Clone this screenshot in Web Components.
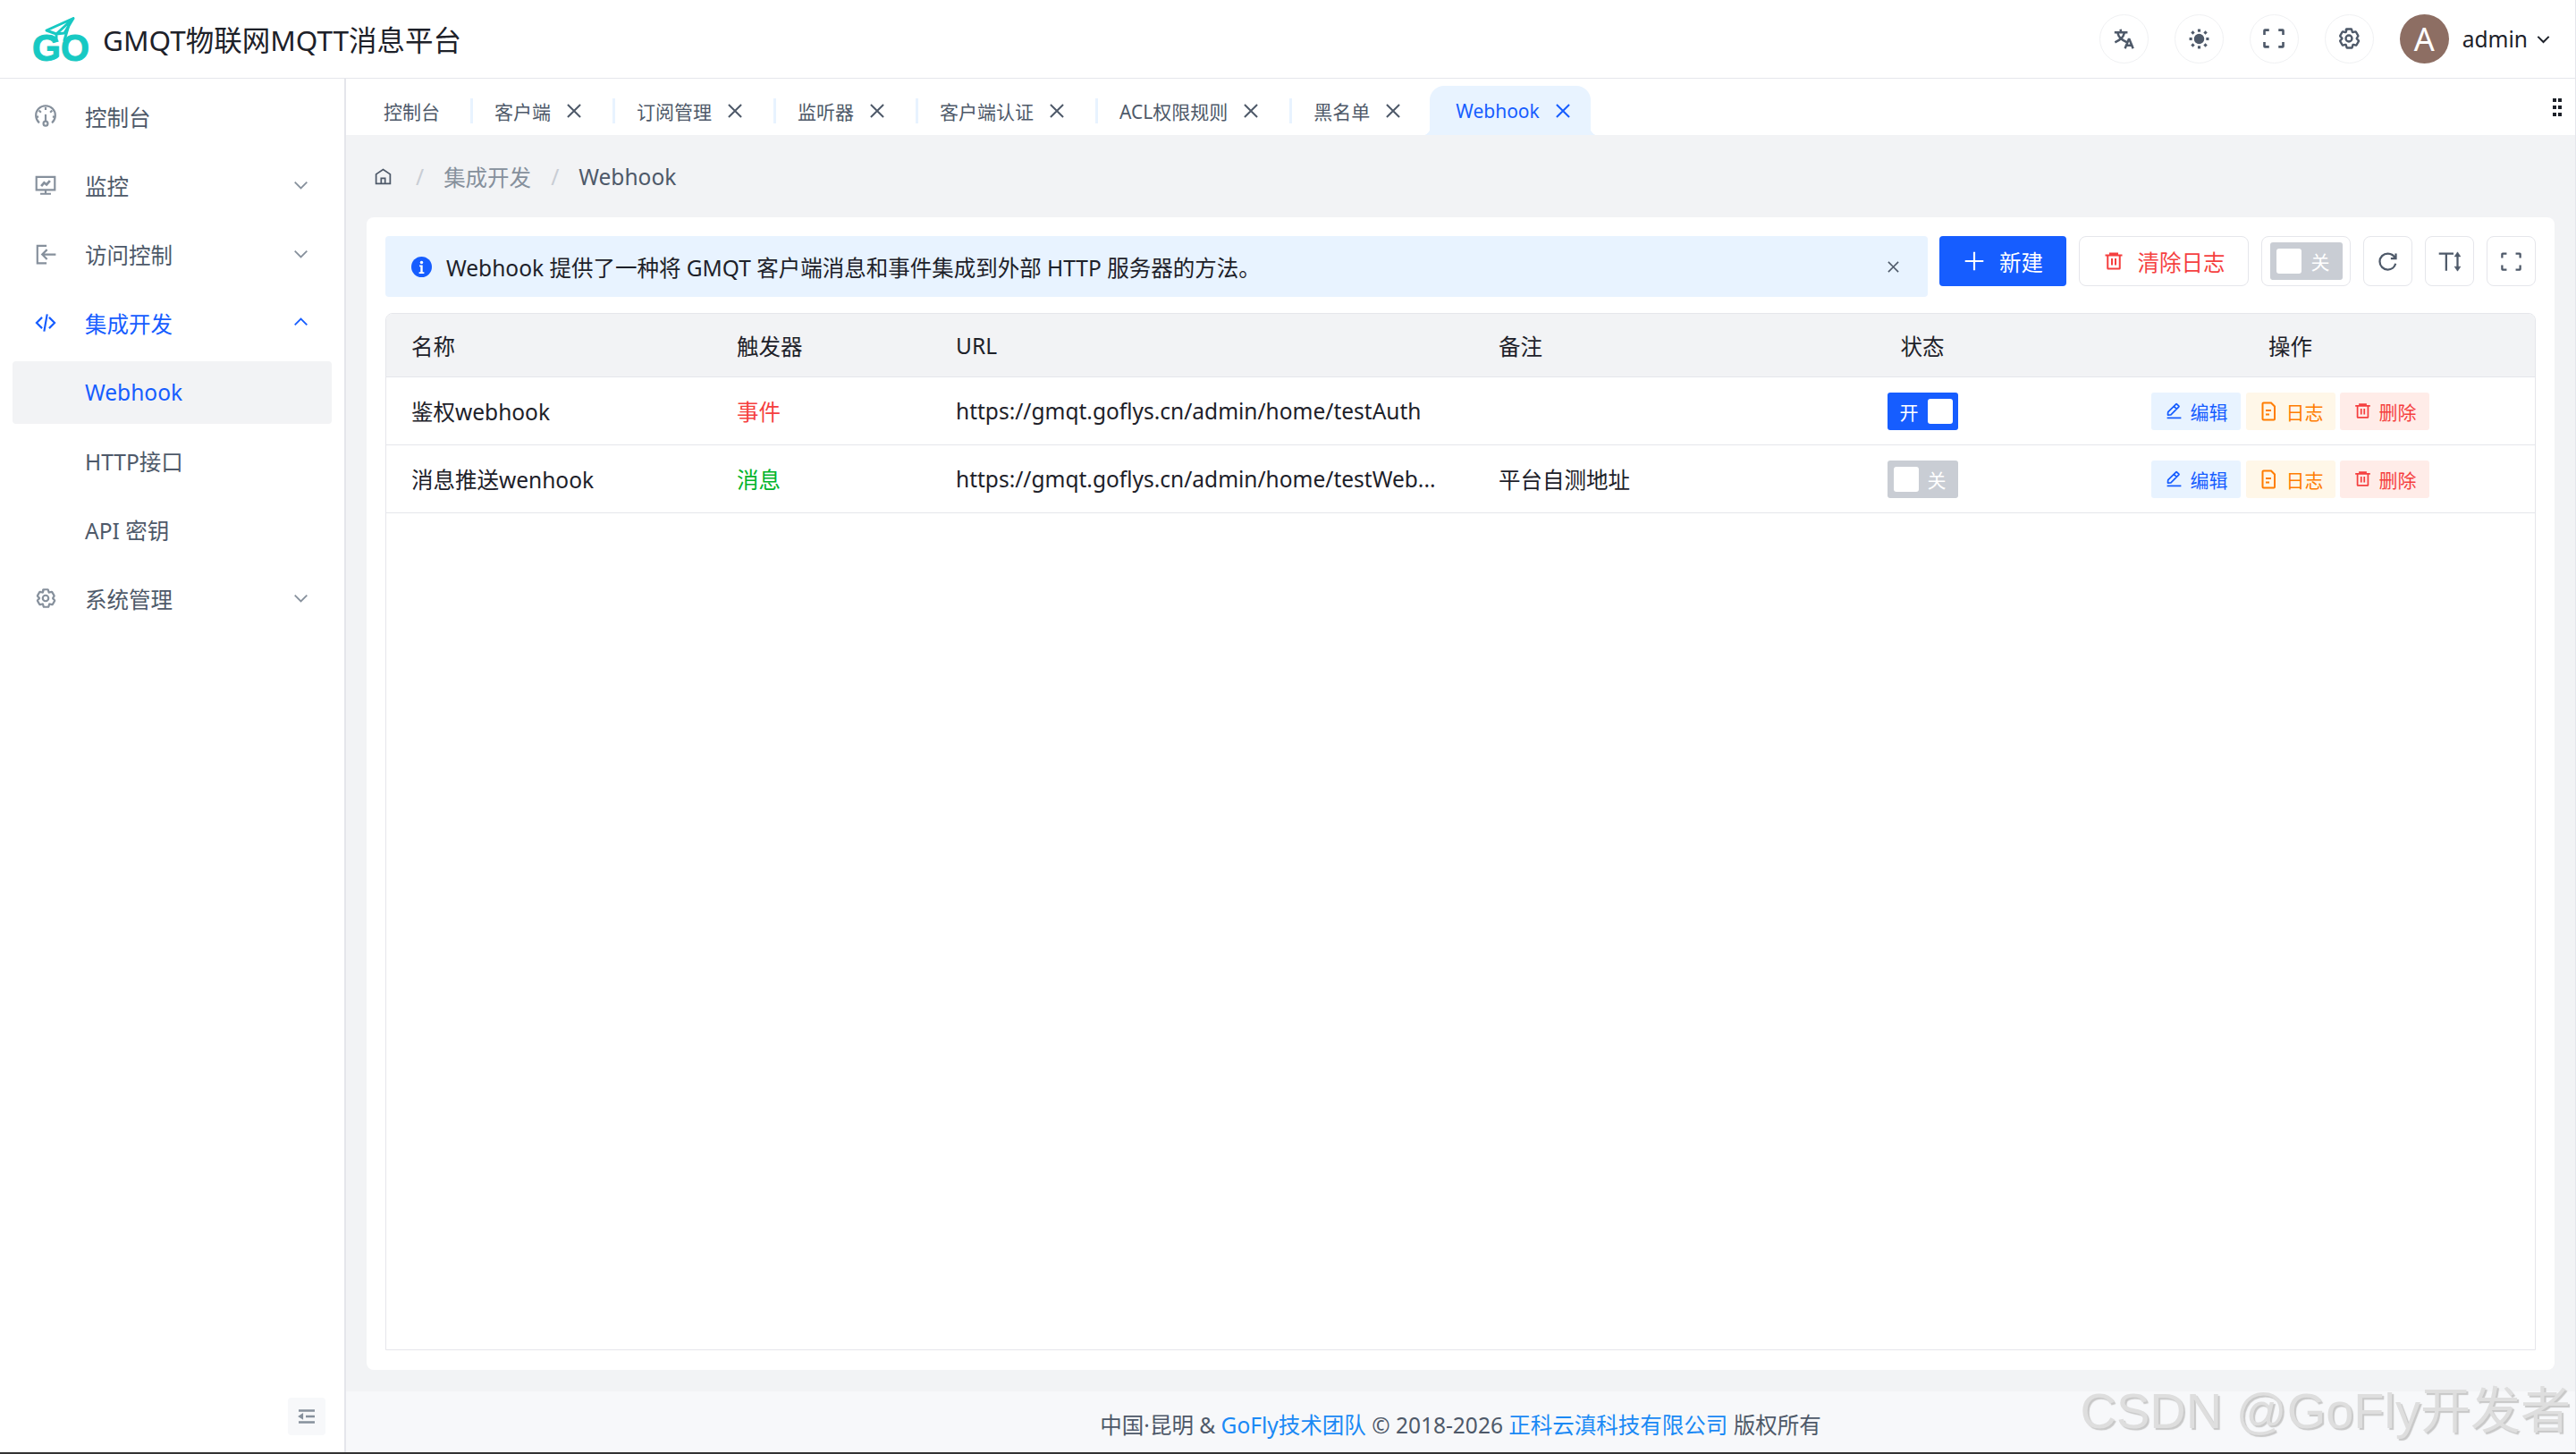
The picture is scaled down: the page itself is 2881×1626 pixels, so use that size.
<!DOCTYPE html>
<html lang="zh-CN">
<head>
<meta charset="utf-8">
<title>Webhook</title>
<style>
  html, body { margin: 0; padding: 0; }
  body {
    width: 2881px;
    height: 1626px;
    overflow: hidden;
    font-family: "Noto Sans", "Noto Sans CJK SC", sans-serif;
    font-size: 24.5px;
    color: #1d2129;
    background: #fff;
  }
</style>
</head>
<body>
<gm-app>
  <gm-header slot="header" title="GMQT物联网MQTT消息平台" user="admin"></gm-header>
  <gm-sidebar slot="side">
    <gm-menu icon="gauge">控制台</gm-menu>
    <gm-menu icon="monitor" arrow="down">监控</gm-menu>
    <gm-menu icon="import" arrow="down">访问控制</gm-menu>
    <gm-menu icon="code" arrow="up" open>集成开发</gm-menu>
    <gm-menu sub selected>Webhook</gm-menu>
    <gm-menu sub>HTTP接口</gm-menu>
    <gm-menu sub>API 密钥</gm-menu>
    <gm-menu icon="settings" arrow="down">系统管理</gm-menu>
  </gm-sidebar>
  <gm-tabs slot="tabs">
    <gm-tab>控制台</gm-tab>
    <gm-tab closable>客户端</gm-tab>
    <gm-tab closable>订阅管理</gm-tab>
    <gm-tab closable>监听器</gm-tab>
    <gm-tab closable>客户端认证</gm-tab>
    <gm-tab closable>ACL权限规则</gm-tab>
    <gm-tab closable plain>黑名单</gm-tab>
    <gm-tab closable active>Webhook</gm-tab>
  </gm-tabs>
  <gm-breadcrumb slot="crumb" parent="集成开发" current="Webhook"></gm-breadcrumb>
  <gm-card slot="card">
    <gm-alert slot="alert">Webhook 提供了一种将 GMQT 客户端消息和事件集成到外部 HTTP 服务器的方法。</gm-alert>
    <gm-button slot="tools" kind="primary" icon="plus">新建</gm-button>
    <gm-button slot="tools" kind="danger" icon="delete">清除日志</gm-button>
    <gm-button slot="tools" kind="box"><gm-switch wide>关</gm-switch></gm-button>
    <gm-button slot="tools" kind="icon" icon="refresh"></gm-button>
    <gm-button slot="tools" kind="icon" icon="lineheight"></gm-button>
    <gm-button slot="tools" kind="icon" icon="fullscreen"></gm-button>
    <gm-table>
      <gm-row head>
        <gm-cell>名称</gm-cell><gm-cell>触发器</gm-cell><gm-cell>URL</gm-cell><gm-cell>备注</gm-cell>
        <gm-cell center>状态</gm-cell><gm-cell center>操作</gm-cell>
      </gm-row>
      <gm-row>
        <gm-cell>鉴权webhook</gm-cell>
        <gm-cell style="color:#f53f3f">事件</gm-cell>
        <gm-cell>https://gmqt.goflys.cn/admin/home/testAuth</gm-cell>
        <gm-cell></gm-cell>
        <gm-cell center><gm-switch on>开</gm-switch></gm-cell>
        <gm-cell center><gm-actions></gm-actions></gm-cell>
      </gm-row>
      <gm-row>
        <gm-cell>消息推送wenhook</gm-cell>
        <gm-cell style="color:#00b42a">消息</gm-cell>
        <gm-cell>https://gmqt.goflys.cn/admin/home/testWeb...</gm-cell>
        <gm-cell>平台自测地址</gm-cell>
        <gm-cell center><gm-switch>关</gm-switch></gm-cell>
        <gm-cell center><gm-actions></gm-actions></gm-cell>
      </gm-row>
    </gm-table>
  </gm-card>
  <gm-footer slot="footer"></gm-footer>
</gm-app>

<script>
const FONT = '"Noto Sans", "Noto Sans CJK SC", sans-serif'

// stroke icons sit on a 48 box, same as the admin template uses
const ICONS = {
  gauge: '<path d="M11 37.5A20 20 0 1 1 37 37.5"/><path d="M24 5v6M10.5 12l4 4M37.5 12l-4 4M4.5 25h5M38.5 25h5"/><path d="M24 20v15"/><circle cx="24" cy="39" r="4.5"/>',
  monitor: '<path d="M5 7h38v27H5z"/><path d="M24 34v8M13 42h22"/><path d="M15 26l6-7 5 4 7-8" stroke-width="5"/>',
  import: '<path d="M26 7H7v36h19"/><path d="M45 25H18M27 15 17 25l10 10"/>',
  code: '<path d="M16.734 12.686 5.42 24l11.314 11.314m14.521-22.628L42.57 24 31.255 35.314M27.2 6.28l-6.251 35.453"/>',
  settings: '<path d="M18.797 6.732A1 1 0 0 1 19.76 6h8.48a1 1 0 0 1 .964.732l1.285 4.628a1 1 0 0 0 1.213.7l4.651-1.2a1 1 0 0 1 1.116.468l4.24 7.344a1 1 0 0 1-.153 1.2L39.193 23.3a1 1 0 0 0 0 1.402l3.364 3.427a1 1 0 0 1 .153 1.2l-4.24 7.344a1 1 0 0 1-1.116.468l-4.65-1.2a1 1 0 0 0-1.214.7l-1.285 4.628a1 1 0 0 1-.964.732h-8.48a1 1 0 0 1-.964-.732L18.51 36.64a1 1 0 0 0-1.213-.7l-4.65 1.2a1 1 0 0 1-1.116-.468l-4.24-7.344a1 1 0 0 1 .153-1.2L10.807 24.7a1 1 0 0 0 0-1.402l-3.364-3.427a1 1 0 0 1-.153-1.2l4.24-7.344a1 1 0 0 1 1.116-.468l4.65 1.2a1 1 0 0 0 1.213-.7l1.286-4.628Z"/><path d="M30 24a6 6 0 1 1-12 0 6 6 0 0 1 12 0Z"/>',
  down: '<path d="M39.6 17.443 24.043 33 8.487 17.443"/>',
  up: '<path d="M39.6 30.557 24.043 15 8.487 30.557"/>',
  close: '<path d="M9.857 9.858 24 24m0 0 14.142 14.142M24 24 38.142 9.858M24 24 9.857 38.142"/>',
  plus: '<path d="M5 24h38M24 5v38"/>',
  delete: '<path d="M5 11h5.5m0 0v29a1 1 0 0 0 1 1h25a1 1 0 0 0 1-1V11m-27 0H16m21.5 0H43m-5.5 0H32m-16 0V7h16v4m-16 0h16M20 18v15m8-15v15"/>',
  edit: '<path d="m30.48 19.038 5.733-5.734a1 1 0 0 0 0-1.414l-5.586-5.586a1 1 0 0 0-1.414 0l-5.734 5.734m7 7L15.763 33.754a1 1 0 0 1-.59.286l-6.048.708a1 1 0 0 1-1.113-1.069l.477-6.31a1 1 0 0 1 .29-.631l14.7-14.7m7 7-7-7M6 42h36"/>',
  file: '<path d="M13 5h17l8 8v28a2 2 0 0 1-2 2H13a2 2 0 0 1-2-2V7a2 2 0 0 1 2-2Z"/><path d="M18 22h12M18 31h8"/>',
  refresh: '<path d="M38.837 18C36.463 12.136 30.715 8 24 8 15.163 8 8 15.163 8 24s7.163 16 16 16c7.455 0 13.72-5.1 15.496-12M40 8v10H30"/>',
  fullscreen: '<path d="M42 17V9a1 1 0 0 0-1-1h-8M6 17V9a1 1 0 0 1 1-1h8m27 23v8a1 1 0 0 1-1 1h-8M6 31v8a1 1 0 0 0 1 1h8"/>',
  home: '<path d="M6 18 24 6l18 12v24H6V18Z"/><path d="M19 42V28h10v14"/>',
  language: '<path d="m42 43-2.385-6M26 43l2.384-6m11.231 0-.795-2-4.18-10h-1.28l-4.181 10-.795 2m11.231 0h-11.23M17 5l1 5M5 11h26M11 11s1.889 7.826 6.611 12.174C22.333 27.522 30 31 30 31"/><path d="M25 11s-1.889 7.826-6.611 12.174C13.667 27.522 6 31 6 31"/>',
  sun: '<circle cx="24" cy="24" r="11" fill="currentColor" stroke="none"/><g fill="currentColor" stroke="none"><rect x="21" y="3" width="6" height="6"/><rect x="21" y="39" width="6" height="6"/><rect x="3" y="21" width="6" height="6"/><rect x="39" y="21" width="6" height="6"/><rect x="7.5" y="7.5" width="6" height="6" transform="rotate(45 10.5 10.5)"/><rect x="34.5" y="7.5" width="6" height="6" transform="rotate(45 37.5 10.5)"/><rect x="7.5" y="34.5" width="6" height="6" transform="rotate(45 10.5 37.5)"/><rect x="34.5" y="34.5" width="6" height="6" transform="rotate(45 37.5 37.5)"/></g>',
  lineheight: '<path d="M3 8h29M17.5 8v34"/><path d="M40 12v24"/><path d="M34 14l6-9 6 9ZM34 34l6 9 6-9Z" fill="currentColor" stroke-width="1"/>',
  fold: '<path d="M42 11H6M42 24H22M42 37H6"/><path d="M13.66 26.912l-4.82-3.118 4.82-3.118v6.236Z" fill="currentColor"/>',
  info: '<circle cx="24" cy="24" r="24" fill="currentColor" stroke="none"/><g fill="#fff" stroke="none"><circle cx="24" cy="13.5" r="3.6"/><path d="M19 20h7.5v16H30v3.5H18V36h3.5V23.5H19Z"/></g>',
}

class GmIcon extends HTMLElement {
  constructor() {
    super()
    this.attachShadow({ mode: "open" })
  }
  connectedCallback() {
    const size = this.getAttribute("size") || 24
    const sw = this.getAttribute("stroke") || 4
    this.shadowRoot.innerHTML = `
      <style>
        :host { display: inline-flex; flex: none; width: ${size}px; height: ${size}px; }
        svg { width: 100%; height: 100%; display: block; overflow: visible; }
      </style>
      <svg viewBox="0 0 48 48" fill="none" stroke="currentColor" stroke-width="${sw}">${ICONS[this.getAttribute("name")] || ""}</svg>`
  }
}

class GmApp extends HTMLElement {
  constructor() {
    super()
    this.attachShadow({ mode: "open" })
    this.shadowRoot.innerHTML = `
      <style>
        :host {
          display: grid;
          grid-template-rows: 88px 1fr;
          grid-template-columns: 387px 1fr;
          height: 1624px;
          border-bottom: 2px solid #333;
          border-right: 1px solid #e5e6eb;
          box-sizing: content-box;
          width: 2880px;
          font-family: ${FONT};
        }
        .top { grid-column: 1 / 3; }
        .main { display: flex; flex-direction: column; background: #f2f3f5; min-width: 0; position: relative; }
        .body { flex: 1; display: flex; min-height: 0; padding: 0 23px 24px 23px; }
      </style>
      <div class="top"><slot name="header"></slot></div>
      <slot name="side"></slot>
      <div class="main">
        <slot name="tabs"></slot>
        <slot name="crumb"></slot>
        <div class="body"><slot name="card"></slot></div>
        <slot name="footer"></slot>
      </div>`
  }
}

class GmHeader extends HTMLElement {
  constructor() {
    super()
    this.attachShadow({ mode: "open" })
  }
  connectedCallback() {
    const round = (name, size, sw) =>
      `<span class="round"><gm-icon name="${name}" size="${size}" stroke="${sw}"></gm-icon></span>`
    this.shadowRoot.innerHTML = `
      <style>
        :host { display: flex; align-items: center; height: 88px; box-sizing: border-box; background: #fff;
                border-bottom: 1px solid #e5e6eb; padding: 0 26px 1px 30px; }
        .logo { width: 80px; height: 65px; flex: none; display: block; }
        h1 { font: 400 31.5px ${FONT}; color: #1d2129; margin: 0 0 0 5px; white-space: nowrap; }
        .right { margin-left: auto; display: flex; align-items: center; gap: 29px; }
        .round { width: 55px; height: 55px; box-sizing: border-box; border: 1px solid #f0f1f3; border-radius: 50%;
                 display: flex; align-items: center; justify-content: center; color: #4e5969; }
        .user { display: flex; align-items: center; font-size: 24.5px; color: #1d2129; }
        .avatar { width: 55px; height: 55px; border-radius: 50%; background: #8d6e63; color: #fff; font-size: 36px;
                  display: flex; align-items: center; justify-content: center; margin-right: 15px; }
        .user gm-icon { margin-left: 8px; }
      </style>
      <svg class="logo" viewBox="0 0 80 65">
        <g fill="none" stroke="#17c9c3" stroke-width="3" stroke-linejoin="round" stroke-linecap="round">
          <path d="M52 9.5 22 23l11 4 19-17.500L42 26l-9 1v7"/>
          <path d="M47 17 42 34"/>
        </g>
        <text x="6" y="57" fill="#17c9c3" stroke="#17c9c3" stroke-width="1" font-family="Liberation Sans" font-weight="700" font-size="43" textLength="64" lengthAdjust="spacingAndGlyphs">GO</text>
      </svg>
      <h1>${this.getAttribute("title")}</h1>
      <div class="right">
        ${round("language", 27, 4.5)}
        ${round("sun", 25, 4)}
        ${round("fullscreen", 28, 4.5)}
        ${round("settings", 28, 4)}
        <div class="user">
          <span class="avatar">A</span>${this.getAttribute("user")}
          <gm-icon name="down" size="19" stroke="5"></gm-icon>
        </div>
      </div>`
    this.removeAttribute("title")
  }
}

class GmSidebar extends HTMLElement {
  constructor() {
    super()
    this.attachShadow({ mode: "open" })
    this.shadowRoot.innerHTML = `
      <style>
        :host { display: flex; flex-direction: column; gap: 7px; position: relative; box-sizing: border-box; background: #fff;
                border-right: 2px solid #e5e6eb; padding: 7.500px 14px; }
        .fold { position: absolute; right: 21px; bottom: 19px; width: 42px; height: 42px; border-radius: 4px;
                background: #f7f8fa; color: #86909c; display: flex; align-items: center; justify-content: center; }
      </style>
      <slot></slot>
      <div class="fold"><gm-icon name="fold" size="24" stroke="5"></gm-icon></div>`
  }
}

class GmMenu extends HTMLElement {
  constructor() {
    super()
    this.attachShadow({ mode: "open" })
  }
  connectedCallback() {
    const icon = this.getAttribute("icon")
    const arrow = this.getAttribute("arrow")
    this.shadowRoot.innerHTML = `
      <style>
        :host { display: flex; align-items: center; height: 70px; box-sizing: border-box; border-radius: 4px;
                padding: 0 24px 0 23.500px; color: #4e5969; font-size: 24.5px; }
        :host([sub]) { padding-left: 81px; }
        :host([selected]) { background: #f2f3f5; color: #165dff; }
        :host([open]) { color: #165dff; }
        .ic { color: #86909c; margin-right: 31.500px; display: flex; margin-top: -2px; }
        :host([open]) .ic, :host([open]) .ar { color: #165dff; }
        .ar { color: #86909c; margin-left: auto; display: flex; margin-top: -2px; }
      </style>
      ${icon ? `<span class="ic"><gm-icon name="${icon}" size="26" stroke="4"></gm-icon></span>` : ""}
      <slot></slot>
      ${arrow ? `<span class="ar"><gm-icon name="${arrow}" size="21" stroke="4"></gm-icon></span>` : ""}`
  }
}

class GmTabs extends HTMLElement {
  constructor() {
    super()
    this.attachShadow({ mode: "open" })
    this.shadowRoot.innerHTML = `
      <style>
        :host { display: flex; height: 63px; box-sizing: border-box; background: #fff; padding: 8px 15px 0 18px; flex: none; }
        .grip { margin-left: auto; align-self: center; margin-top: -8px; display: grid; grid-template-columns: 4px 4px; gap: 4px 2px; }
        .grip i { width: 4px; height: 4px; background: #1d2129; }
      </style>
      <slot></slot>
      <div class="grip"><i></i><i></i><i></i><i></i><i></i><i></i></div>`
  }
}

class GmTab extends HTMLElement {
  constructor() {
    super()
    this.attachShadow({ mode: "open" })
  }
  connectedCallback() {
    const x = this.hasAttribute("closable")
      ? '<gm-icon class="x" name="close" size="24" stroke="4"></gm-icon>'
      : ""
    this.shadowRoot.innerHTML = `
      <style>
        :host { display: flex; align-items: center; position: relative; height: 55px; box-sizing: border-box;
                padding: 0 37px 0 24px; font-size: 21px; color: #4e5969; white-space: nowrap; }
        :host(:not([plain]):not([active]))::after { content: ""; position: absolute; right: 0; top: 14px; width: 3px; height: 28px; background: #e8f3ff; }
        :host([plain]) { padding-right: 32px; }
        :host([active]) { background: #e8f3ff; color: #165dff; border-radius: 16px 16px 0 0; padding: 0 22px 0 29px; }
        :host([active])::before, :host([active])::after { content: ""; position: absolute; bottom: 0; width: 8px; height: 8px; }
        :host([active])::before { left: -8px; background: radial-gradient(circle at 0 0, transparent 8px, #e8f3ff 8.5px); }
        :host([active])::after { right: -8px; background: radial-gradient(circle at 100% 0, transparent 8px, #e8f3ff 8.5px); }
        .x { margin-left: 14px; margin-right: -3px; }
      </style>
      <slot></slot>${x}`
  }
}

class GmBreadcrumb extends HTMLElement {
  constructor() {
    super()
    this.attachShadow({ mode: "open" })
  }
  connectedCallback() {
    this.shadowRoot.innerHTML = `
      <style>
        :host { display: flex; align-items: center; height: 92px; box-sizing: border-box; padding: 0 0 0 30px; flex: none; font-size: 24.5px; color: #86909c; }
        .sep { color: #c9cdd4; margin: 0 22px; }
        .cur { color: #4e5969; }
        gm-icon { color: #4e5969; margin-right: 4px; margin-left: 1px; }
      </style>
      <gm-icon name="home" size="21" stroke="4"></gm-icon>
      <span class="sep">/</span><span>${this.getAttribute("parent")}</span>
      <span class="sep">/</span><span class="cur">${this.getAttribute("current")}</span>`
  }
}

class GmCard extends HTMLElement {
  constructor() {
    super()
    this.attachShadow({ mode: "open" })
    this.shadowRoot.innerHTML = `
      <style>
        :host { display: flex; flex-direction: column; flex: 1; min-width: 0; box-sizing: border-box; background: #fff;
                border-radius: 8px; padding: 21px 21px 22px; }
        .bar { display: flex; align-items: flex-start; gap: 14px; margin-bottom: 18px; }
        .tools { display: flex; gap: 14px; }
        slot[name=alert]::slotted(*) { flex: 1; margin-right: -1px; }
      </style>
      <div class="bar">
        <slot name="alert"></slot>
        <div class="tools"><slot name="tools"></slot></div>
      </div>
      <slot></slot>`
  }
}

class GmAlert extends HTMLElement {
  constructor() {
    super()
    this.attachShadow({ mode: "open" })
    this.shadowRoot.innerHTML = `
      <style>
        :host { display: flex; align-items: center; height: 68px; box-sizing: border-box; background: #e8f3ff; border-radius: 4px;
                padding: 0 29px 0 29px; font-size: 24.5px; color: #1d2129; white-space: nowrap; }
        .txt { flex: 1; margin-left: 16px; }
        .info { color: #165dff; display: flex; }
        .x { color: #4e5969; display: flex; }
      </style>
      <span class="info"><gm-icon name="info" size="23"></gm-icon></span>
      <span class="txt"><slot></slot></span>
      <span class="x"><gm-icon name="close" size="19" stroke="4"></gm-icon></span>`
  }
}

class GmButton extends HTMLElement {
  constructor() {
    super()
    this.attachShadow({ mode: "open" })
  }
  connectedCallback() {
    const icon = this.getAttribute("icon")
    const kind = this.getAttribute("kind")
    const size = { primary: 26, danger: 24, icon: 27 }[kind] || 24
    this.shadowRoot.innerHTML = `
      <style>
        :host { display: inline-flex; align-items: center; justify-content: center; height: 56px; box-sizing: border-box;
                border-radius: 4px; font-size: 24.5px; gap: 15px; white-space: nowrap; }
        :host([kind=primary]) { width: 142px; background: #165dff; color: #fff; }
        :host([kind=danger]) { width: 190px; border: 1px solid #e5e6eb; border-radius: 8px; color: #f53f3f; background: #fff; }
        :host([kind=box]) { width: 100px; border: 1px solid #e5e6eb; border-radius: 8px; }
        :host([kind=icon]) { width: 55px; border: 1px solid #e5e6eb; border-radius: 8px; color: #4e5969; }
      </style>
      ${icon ? `<gm-icon name="${icon}" size="${size}" stroke="4"></gm-icon>` : ""}<slot></slot>`
  }
}

class GmSwitch extends HTMLElement {
  constructor() {
    super()
    this.attachShadow({ mode: "open" })
    this.shadowRoot.innerHTML = `
      <style>
        :host { display: inline-flex; align-items: center; box-sizing: border-box; width: 79px; height: 42px; padding: 0 7px;
                background: #c9cdd4; border-radius: 3px; color: #fff; font-size: 21px; gap: 10px; vertical-align: middle; }
        :host([wide]) { width: 81px; padding: 0 7px; gap: 11px; }
        :host([on]) { background: #165dff; flex-direction: row-reverse; padding: 0 6px; justify-content: flex-start; }
        .knob { width: 28px; height: 28px; border-radius: 3px; background: #fff; flex: none; }
      </style>
      <span class="knob"></span><slot></slot>`
  }
}

class GmTable extends HTMLElement {
  constructor() {
    super()
    this.attachShadow({ mode: "open" })
    this.shadowRoot.innerHTML = `
      <style>
        :host { display: block; flex: 1; box-sizing: border-box; border: 1px solid #e5e6eb; border-radius: 8px 8px 0 0; overflow: hidden; }
      </style>
      <slot></slot>`
  }
}

class GmRow extends HTMLElement {
  constructor() {
    super()
    this.attachShadow({ mode: "open" })
    this.shadowRoot.innerHTML = `
      <style>
        :host { display: grid; grid-template-columns: 364px 245px 607px 364px 276px 1fr; align-items: center;
                height: 76px; box-sizing: border-box; border-bottom: 1px solid #e5e6eb; background: #fff; }
        :host([head]) { height: 71px; background: #f2f3f5; }
      </style>
      <slot></slot>`
  }
}

class GmCell extends HTMLElement {
  constructor() {
    super()
    this.attachShadow({ mode: "open" })
    this.shadowRoot.innerHTML = `
      <style>
        :host { display: block; padding-left: 28px; font-size: 24.5px; white-space: nowrap; min-width: 0; }
        :host([center]) { padding-left: 0; text-align: center; }
      </style>
      <slot></slot>`
  }
}

class GmActions extends HTMLElement {
  constructor() {
    super()
    this.attachShadow({ mode: "open" })
    const btn = (cls, icon, size, label) =>
      `<span class="a ${cls}"><gm-icon name="${icon}" size="${size}" stroke="4"></gm-icon>${label}</span>`
    this.shadowRoot.innerHTML = `
      <style>
        :host { display: inline-flex; gap: 5.500px; vertical-align: middle; }
        .a { display: inline-flex; align-items: center; justify-content: center; width: 100px; height: 42px; border-radius: 3px;
             font-size: 21px; gap: 8px; }
        .edit { background: #e8f3ff; color: #165dff; }
        .log { background: #fff7e8; color: #ff7d00; }
        .del { background: #ffece8; color: #f53f3f; }
      </style>
      ${btn("edit", "edit", 21, "编辑")}${btn("log", "file", 24, "日志")}${btn("del", "delete", 21, "删除")}`
  }
}

class GmFooter extends HTMLElement {
  constructor() {
    super()
    this.attachShadow({ mode: "open" })
    this.shadowRoot.innerHTML = `
      <style>
        :host { display: flex; align-items: flex-end; justify-content: center; height: 68px; box-sizing: border-box; flex: none;
                background: #f7f8fa; padding-bottom: 14px; font-size: 24.5px; color: #4e5969; position: relative; white-space: pre; }
        a { color: #1a89f5; text-decoration: none; }
        .mark { position: absolute; right: 5px; bottom: 11px; font: 400 56px "Liberation Sans", "Noto Sans CJK SC", sans-serif;
                color: #dedede; text-shadow: 2px 2px 1px #c8c8c8; white-space: nowrap; }
      </style>
      <span>中国·昆明 &amp; <a>GoFly技术团队</a> © 2018-2026 <a>正科云滇科技有限公司</a> 版权所有</span>
      <span class="mark">CSDN @GoFly开发者</span>`
  }
}

customElements.define("gm-icon", GmIcon)
customElements.define("gm-app", GmApp)
customElements.define("gm-header", GmHeader)
customElements.define("gm-sidebar", GmSidebar)
customElements.define("gm-menu", GmMenu)
customElements.define("gm-tabs", GmTabs)
customElements.define("gm-tab", GmTab)
customElements.define("gm-breadcrumb", GmBreadcrumb)
customElements.define("gm-card", GmCard)
customElements.define("gm-alert", GmAlert)
customElements.define("gm-button", GmButton)
customElements.define("gm-switch", GmSwitch)
customElements.define("gm-table", GmTable)
customElements.define("gm-row", GmRow)
customElements.define("gm-cell", GmCell)
customElements.define("gm-actions", GmActions)
customElements.define("gm-footer", GmFooter)
</script>
</body>
</html>
